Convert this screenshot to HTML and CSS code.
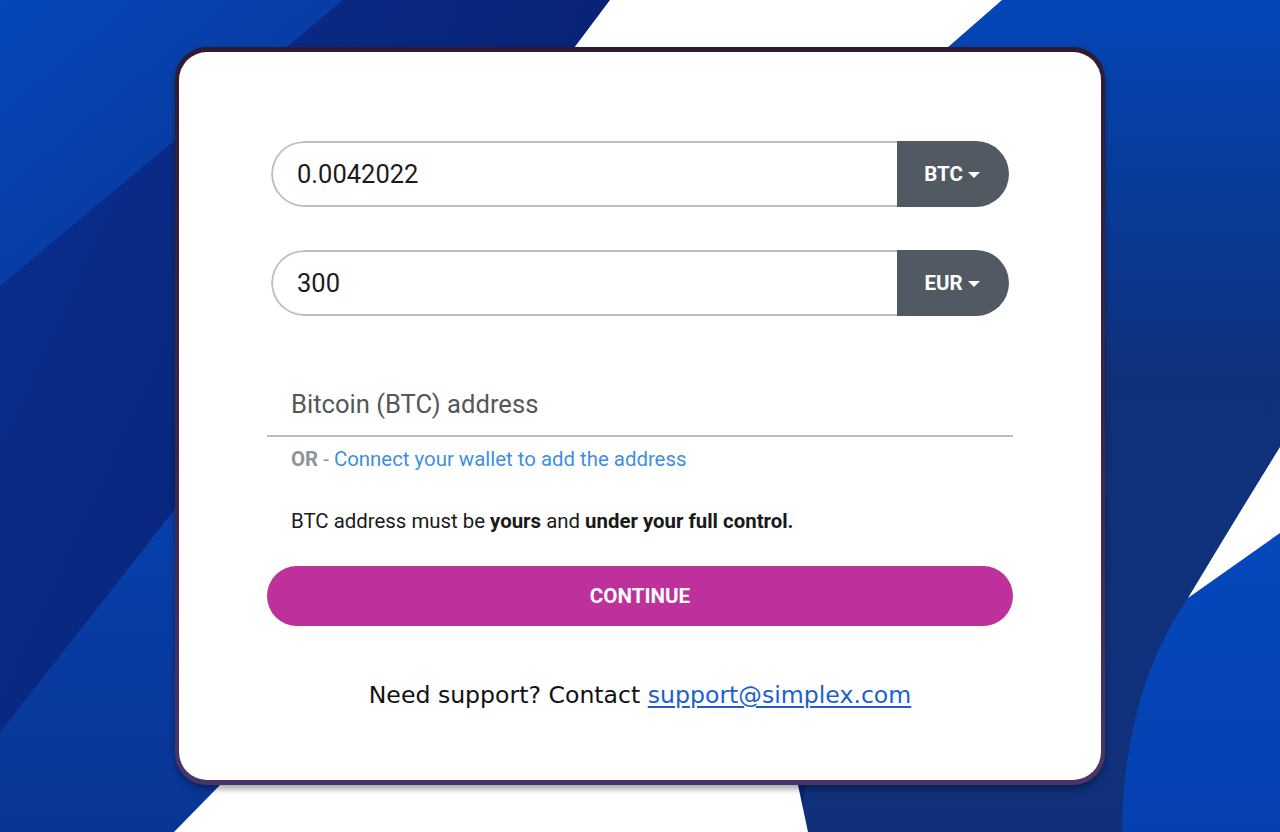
FILE: index.html
```html
<!DOCTYPE html>
<html lang="en">
<head>
<meta charset="utf-8">
<title>Simplex - Buy BTC</title>
<link rel="stylesheet" href="styles.css">
</head>
<body>
<svg class="bg" viewBox="0 0 1280 832" preserveAspectRatio="none" aria-hidden="true">
  <defs>
    <linearGradient id="gMid" x1="0" y1="0" x2="1" y2="0.3">
      <stop offset="0" stop-color="#0a2f92"/>
      <stop offset="0.6" stop-color="#081f6c"/>
      <stop offset="1" stop-color="#0a2a82"/>
    </linearGradient>
    <linearGradient id="gTL" x1="0" y1="0" x2="1" y2="1">
      <stop offset="0" stop-color="#0447b8"/>
      <stop offset="1" stop-color="#0b3392"/>
    </linearGradient>
    <linearGradient id="gBL" x1="0" y1="0" x2="0" y2="1">
      <stop offset="0" stop-color="#0446b8"/>
      <stop offset="1" stop-color="#0a3594"/>
    </linearGradient>
    <linearGradient id="gR" x1="0" y1="0" x2="0" y2="1">
      <stop offset="0" stop-color="#0346b8"/>
      <stop offset="0.45" stop-color="#0f317c"/>
      <stop offset="1" stop-color="#10307a"/>
    </linearGradient>
    <linearGradient id="gBR" x1="0" y1="0" x2="0" y2="1">
      <stop offset="0" stop-color="#0448bc"/>
      <stop offset="1" stop-color="#0540b0"/>
    </linearGradient>
  </defs>
  <rect x="0" y="0" width="1280" height="832" fill="url(#gMid)"/>
  <path d="M0 0 L343 0 L0 286 Z" fill="url(#gTL)"/>
  <path d="M0 732 L175 509 L320 330 L320 832 L0 832 Z" fill="url(#gBL)"/>
  <path d="M900 0 L1280 0 L1280 832 L800 832 Z" fill="url(#gR)"/>
  <path d="M1188 598 L1280 533 L1280 832 L1122 832 Q1124 690 1188 598 Z" fill="url(#gBR)"/>
  <path d="M1188 598 Q1236 518 1280 447 L1280 533 Z" fill="#ffffff"/>
  <path d="M610 0 L1002 0 L947 48 Q830 400 798 785 L808 832 L174 832 L220 785 L574 48 Z" fill="#ffffff"/>
</svg>

<main class="page">
  <section class="frame">
    <div class="card">
      <div class="form">
        <div class="pill">
          <div class="pill-input">0.0042022</div>
          <div class="pill-select">BTC <span class="caret"></span></div>
        </div>
        <div class="pill pill-second">
          <div class="pill-input">300</div>
          <div class="pill-select">EUR <span class="caret"></span></div>
        </div>
        <div class="address">Bitcoin (BTC) address</div>
        <div class="or-line"><span class="or">OR</span> - <a class="connect" href="#">Connect your wallet to add the address</a></div>
        <p class="note">BTC address must be <b>yours</b> and <b>under your full control.</b></p>
        <button class="continue" type="button">CONTINUE</button>
        <p class="support">Need support? Contact <a href="#">support@simplex.com</a></p>
      </div>
    </div>
  </section>
</main>
</body>
</html>
```

FILE: styles.css
```css
html, body {
  margin: 0;
  padding: 0;
  width: 1280px;
  height: 832px;
  overflow: hidden;
}

body {
  font-family: Roboto, "Liberation Sans", Arial, sans-serif;
  background: #0a2a82;
}

.bg {
  position: fixed;
  left: 0;
  top: 0;
  width: 1280px;
  height: 832px;
  z-index: 0;
}

.page {
  position: relative;
  z-index: 1;
  display: flex;
  justify-content: center;
  padding-top: 47px;
}

.frame {
  width: 930px;
  height: 738px;
  box-sizing: border-box;
  padding: 5px 4px;
  border-radius: 32px;
  background: linear-gradient(180deg, #331a33 0%, #3c2548 50%, #4b3566 100%);
  box-shadow: 0 4px 6px rgba(0, 0, 0, 0.35);
}

.card {
  height: 100%;
  background: #ffffff;
  border-radius: 28px;
  display: flex;
  justify-content: center;
}

.form {
  width: 746px;
  padding-top: 89px;
}

.pill {
  margin: 0 4px;
  height: 66px;
  display: flex;
  border-radius: 33px;
  overflow: hidden;
}

.pill-second {
  margin-top: 43px;
}

.pill-input {
  flex: 1;
  border: 2px solid #bfbfbf;
  border-right: none;
  border-radius: 33px 0 0 33px;
  display: flex;
  align-items: center;
  padding-left: 24px;
  font-size: 25.5px;
  color: #1c1c1c;
}

.pill-select {
  width: 110px;
  background: #515a62;
  color: #ffffff;
  font-weight: 700;
  font-size: 20.5px;
  display: flex;
  align-items: center;
  justify-content: center;
  gap: 5px;
  padding-right: 2px;
}

.caret {
  width: 0;
  height: 0;
  border-left: 6px solid transparent;
  border-right: 6px solid transparent;
  border-top: 6px solid #ffffff;
  margin-top: 2px;
}

.address {
  margin-top: 55px;
  height: 66px;
  box-sizing: border-box;
  border-bottom: 2px solid #bdbdbd;
  display: flex;
  align-items: center;
  padding-left: 24px;
  padding-top: 2px;
  font-size: 25.6px;
  color: #555759;
}

.or-line {
  margin-top: 10px;
  padding-left: 24px;
  font-size: 20.4px;
  line-height: 24px;
  color: #8c939b;
}

.or {
  font-weight: 700;
}

.connect {
  color: #3d8fe3;
  text-decoration: none;
}

.note {
  margin: 38px 0 0;
  padding-left: 24px;
  font-size: 20.4px;
  line-height: 24px;
  color: #1a1a1a;
}

.note b {
  font-weight: 700;
}

.continue {
  margin-top: 33px;
  width: 100%;
  height: 60px;
  border: none;
  border-radius: 30px;
  background: #be309b;
  color: #ffffff;
  font-family: Roboto, "Liberation Sans", Arial, sans-serif;
  font-weight: 700;
  font-size: 20.6px;
  cursor: pointer;
}

.support {
  margin: 55px 0 0;
  text-align: center;
  font-family: "DejaVu Sans", "Open Sans", sans-serif;
  font-size: 23.6px;
  line-height: 28px;
  color: #111111;
}

.support a {
  color: #1b5fd1;
  text-decoration: underline;
  text-underline-offset: 3px;
}
```
